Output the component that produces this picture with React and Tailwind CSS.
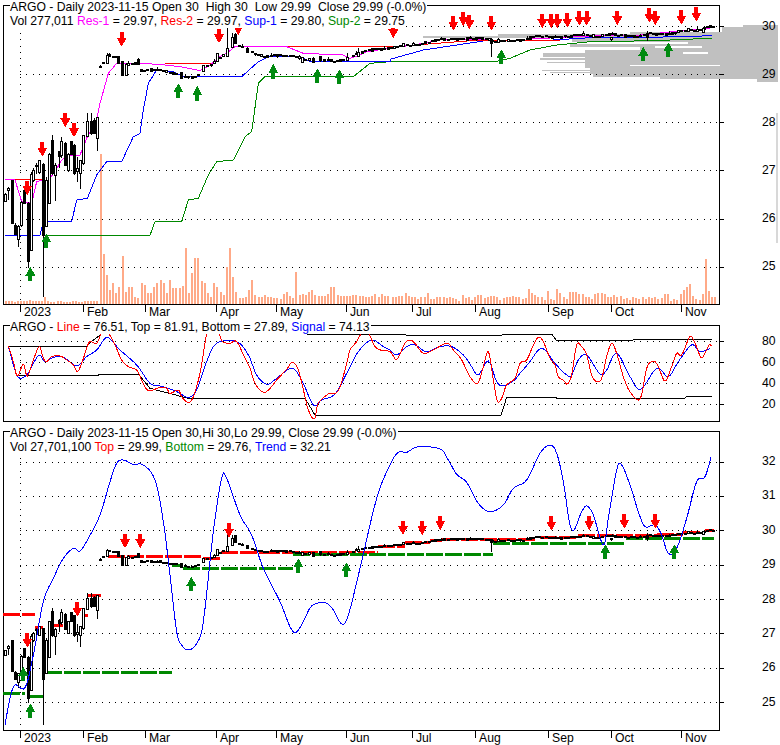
const FONT = "font-['Liberation_Sans',Arial,sans-serif]";
const R = 1170; // x offset of the right half of each traced panel (coords are traced at 3x)

const pts = (left, right, oy) =>
  [...left, ...right.map(([x, y]) => [x + R, y])].map(([x, y]) => `${x / 3},${oy + y / 3}`).join(" ");

// denser points through a traced curve, so it reads as a curve and not as a polygon
const curve = (left, right, oy) => {
  const p = [...left, ...right.map(([x, y]) => [x + R, y])];
  const out = [];
  for (let i = 0; i < p.length - 1; i++) {
    const a = p[Math.max(i - 1, 0)];
    const b = p[i];
    const c = p[i + 1];
    const d = p[Math.min(i + 2, p.length - 1)];
    for (let s = 0; s < 6; s++) {
      const t = s / 6;
      const f = (k) =>
        0.5 * (2 * b[k] + (c[k] - a[k]) * t + (2 * a[k] - 5 * b[k] + 4 * c[k] - d[k]) * t * t + (3 * b[k] - a[k] - 3 * c[k] + d[k]) * t * t * t);
      out.push(`${f(0) / 3},${oy + f(1) / 3}`);
    }
  }
  return out.join(" ");
};

// ---- price panel traces ----
const res1 = pts(
  [[15,538],[45,540],[65,605],[95,610],[110,545],[130,540],[145,540],[165,515],[185,480],[210,465],[240,465],[262,410],[290,360],[300,310],[325,220],[350,190],[430,190],[495,195],[540,200],[600,212],[630,195],[660,170],[680,160],[705,140],[860,140],[885,150],[910,160],[1030,165],[1050,175],[1080,165],[1100,155],[1170,145]],
  [[100,130],[150,120],[300,117],[420,117],[600,108],[750,105],[880,92],[960,85]], 0);
const sup1 = pts(
  [[15,706],[120,706],[130,665],[215,665],[230,600],[262,595],[290,525],[320,485],[365,485],[400,410],[420,400],[430,330],[445,250],[470,210],[520,215],[550,230],[725,230],[775,185],[805,170],[900,170],[930,185],[1170,185]],
  [[0,178],[100,150],[200,135],[300,120],[460,122],[600,113],[760,112],[880,110],[965,107]], 0);
const sup2 = pts(
  [[130,706],[450,706],[465,665],[545,665],[565,600],[595,595],[625,525],[650,485],[700,480],[735,410],[755,395],[775,250],[795,230],[1060,230],[1110,190],[1170,185]],
  [[0,184],[320,184],[360,175],[420,150],[500,135],[600,125],[800,122],[880,118],[965,115]], 0);
const res2 = [[15,538,130,538],[495,190,640,190],[710,140,1170,140]];

const grey = [
  [25,27,743],[27,32,722],[32,34,630],[34,36,498],[36,38,423],[38,42,572],[42,44,688],[44,47,570],[47,50,640],[50,53,585],
  [53,57,543],[57,58,585],[58,60,540],[60,62,585],[62,63,547],[63,68,585],[68,70,590],[70,71,542],[71,72,590],[72,73,550],[73,74,590],[74,77,593],[77,79,660],[79,82,757],
];
const greyNotch = [[655,46,702,47],[683,52,708,53],[630,65,720,65]];

const candles = [
  [15,578,607,582,605,0],[25,560,600,565,572,0],[35,540,672,540,670,1],[45,670,705,675,703,1],[53,675,740,680,718,0],
  [62,603,680,606,675,0],[72,570,612,572,610,1],[83,605,803,610,785,1],[92,515,752,522,750,0],[100,505,545,510,540,0],
  [108,490,522,495,500,1],[118,480,522,482,518,0],[128,490,892,492,705,1],[138,530,680,540,680,0],[148,460,612,462,610,0],
  [157,405,525,420,520,1],[166,490,603,495,525,0],[176,452,505,455,470,1],[184,410,475,425,465,0],[196,425,498,430,495,1],
  [205,460,515,462,510,0],[214,422,465,425,462,1],[223,432,525,435,520,1],[232,470,545,505,515,0],[241,480,568,482,520,0],
  [250,405,495,405,490,0],[260,340,412,365,410,0],[272,340,405,365,400,1],[282,355,402,360,400,1],[290,350,452,352,415,0],
  [320,158,192,165,190,0],[328,160,172,162,170,1],[355,168,192,170,190,1],[365,185,227,185,225,1],[377,190,227,192,225,0],
  [413,175,195,178,193,1],[542,215,238,218,236,1],[610,195,215,197,213,0],[650,158,185,160,183,0],[680,85,172,145,170,0],
  [695,100,145,112,143,0],[705,100,132,103,130,1],[740,142,158,144,156,1],[905,170,188,172,186,0],[938,172,190,174,188,1],
  [960,168,186,170,182,1],[1042,160,182,172,180,0],[1075,145,170,158,168,0],
];
const path = [[305,195],[320,175],[345,168],[387,195],[413,186],[422,210],[480,210],[510,218],[540,225],[560,232],[590,230],[610,205],[640,190],[665,170],[715,135],[740,150],[760,160],[790,170],[830,165],[880,168],[905,178],[940,180],[980,180],[1010,185],[1040,175],[1075,160],[1110,150],[1170,145],[1210,135],[1255,135],[1290,125],[1320,118],[1420,115],[1450,115],[1480,125],[1515,122],[1570,120],[1610,107],[1670,113],[1720,107],[1760,103],[1790,113],[1820,102],[1870,107],[1920,110],[1945,100],[1980,103],[2020,100],[2060,90],[2100,92],[2108,85],[2130,79]];
const yAt = (x) => {
  for (let i = 1; i < path.length; i++) {
    if (x <= path[i][0]) {
      const [x0, y0] = path[i - 1];
      const [x1, y1] = path[i];
      return y0 + ((y1 - y0) * (x - x0)) / (x1 - x0);
    }
  }
  return 79;
};
const heights = [2, 4, 3, 6, 2, 3, 8, 3, 2, 5];
for (let x = 300, i = 0; x < 2140; x += 9.48, i++) {
  if (candles.some((c) => Math.abs(c[0] - x) < 7)) continue;
  const h = heights[i % 10];
  const y = yAt(x) + (i % 3) - 1;
  candles.push([x, y - h / 2 - (i % 9 === 0 ? 6 : 0), y + h / 2 + (i % 7 === 0 ? 3 : 0), y - h / 2, y + h / 2, i % 3 === 0 ? 0 : 1]);
}
candles.push([1474, 115, 172, 118, 130, 1], [1832, 110, 122, 112, 118, 0], [1942, 92, 122, 100, 112, 1], [2110, 85, 100, 85, 98, 0]);

const volLeft = [150,50,29,14,21,11,17,48,12,17,17,7,6,21,19,11,11,17,21,24,21,11,24,16,16,16,18,56,11,31,46,46,23,21,11,7,21,17,12,9,37,56,27,12,6,6,7,14,24,9,7,7,9,7,7,6,6,5,10,12,8,6,32,9,10,9,12,14,9,8,8,8,10,17,17,9,8,8,8,8,9,9,8,8,7,7,8,10,7,10,8,8];
const volRight = [7,7,8,8,11,8,7,7,5,7,7,11,5,5,7,7,7,6,7,6,5,3,9,6,7,4,7,9,9,6,7,8,8,7,4,6,7,7,8,7,7,5,6,15,11,9,7,7,4,13,5,4,15,11,7,5,12,12,12,10,10,7,7,5,10,11,11,10,7,7,9,7,8,5,6,4,7,6,5,7,5,7,6,7,5,6,10,10,3,5,4,10,14,17,20,8,5,4,10,45,13,7,7];
const volFirst = [3,3,3,2,3,3,3,3,4,3,3,3,3,7,3,2,2,3,3,2,2,2,3,3,2,2,3,3,3,3,3];

const downsTop = [[82,585],[127,470],[196,382],[222,412],[365,140],[657,130],[715,105],[1180,115],[1360,92],[1390,78],[1408,88],[1474,92],[1627,85],[1654,85],[1672,85],[1702,83],[1738,77],[1760,77],[1852,76],[1948,68],[1966,76],[2044,74],[2089,65]];
const upsTop = [[91,800],[139,700],[535,250],[592,258],[820,192],[952,205],[1018,208],[1504,148],[1930,140],[2005,127]];

// ---- oscillator traces ----
const oscLine = curve(
  [[25,138],[40,185],[52,228],[70,193],[82,228],[100,180],[118,140],[130,175],[140,185],[155,170],[180,168],[200,180],[220,195],[232,215],[245,190],[260,145],[270,125],[290,130],[305,100],[325,100],[345,135],[365,180],[385,200],[410,210],[425,240],[445,272],[480,262],[500,265],[510,280],[535,270],[545,290],[565,308],[580,290],[600,220],[615,130],[625,90],[655,100],[668,125],[690,130],[710,125],[735,175],[750,205],[765,250],[790,277],[810,265],[830,240],[860,208],[877,187],[895,210],[915,290],[925,330],[943,357],[955,310],[985,282],[1015,272],[1040,190],[1050,150],[1070,125],[1085,100],[1105,100],[1130,145],[1170,155]],
  [[20,178],[45,130],[60,120],[75,130],[100,160],[130,150],[170,130],[190,150],[215,180],[240,230],[263,250],[280,200],[295,155],[310,240],[322,303],[335,295],[350,255],[375,235],[390,190],[410,180],[430,135],[445,112],[460,125],[480,175],[495,195],[505,230],[520,240],[532,252],[545,225],[560,135],[575,140],[590,165],[605,225],[620,245],[635,235],[650,170],[665,130],[680,160],[700,230],[720,275],[750,297],[770,205],[790,183],[805,200],[825,243],[845,200],[860,160],[875,165],[900,110],[915,130],[933,172],[945,160],[958,133],[965,140]], 300);
const oscSignal = curve(
  [[25,138],[52,228],[80,225],[100,190],[118,165],[135,185],[160,172],[190,172],[230,197],[260,170],[290,150],[315,115],[330,117],[360,150],[410,195],[450,250],[480,258],[520,270],[540,280],[565,292],[590,270],[620,185],[650,130],[710,125],[745,165],[770,225],[800,253],[830,235],[875,205],[905,240],[940,315],[965,300],[1005,282],[1040,220],[1075,155],[1115,120],[1150,140],[1170,150]],
  [[20,165],[50,140],[75,135],[110,155],[150,140],[185,140],[220,165],[245,200],[265,225],[295,183],[320,245],[340,257],[370,243],[390,220],[420,185],[445,150],[465,150],[495,190],[530,225],[545,225],[565,180],[590,165],[630,222],[650,210],[680,160],[720,230],[752,268],[800,205],[835,230],[865,185],[905,135],[930,155],[965,143]], 300);
const oscTop = [
  pts([[25,138],[262,138],[270,128],[300,105]], [], 300),
  pts([[920,103],[1170,103]], [[45,103],[50,106],[335,106],[340,102],[485,102],[500,122],[965,118]], 300),
];
const oscBottom = pts(
  [[52,226],[295,226],[295,222],[415,222],[450,265],[565,295],[915,295],[945,345],[1170,345]],
  [[333,346],[350,292],[497,292],[500,295],[885,295],[890,288],[965,288]], 300);

// ---- trend panel traces ----
const trend = curve(
  [[15,900],[30,820],[45,780],[75,788],[100,690],[130,530],[160,460],[190,400],[220,370],[240,378],[265,340],[300,270],[330,170],[350,115],[370,105],[400,118],[430,120],[465,165],[490,290],[510,450],[530,620],[545,660],[565,675],[590,655],[610,590],[640,320],[665,160],[680,160],[720,270],[755,330],[790,430],[840,530],[870,605],[888,622],[910,590],[935,543],[975,533],[1000,555],[1025,597],[1045,570],[1080,430],[1130,220],[1170,120]],
  [[25,82],[50,82],[85,65],[150,72],[175,105],[200,148],[230,172],[265,235],[300,260],[340,240],[370,190],[410,165],[450,85],[480,60],[500,85],[520,170],[545,315],[575,260],[590,243],[610,270],[640,360],[655,280],[680,135],[695,120],[720,180],[745,260],[765,305],[795,300],[815,330],[835,385],[860,370],[890,280],[920,170],[945,155],[965,90]], 425);
const topSegs = [[10,105,568],[105,130,607],[160,190,600],[245,265,570],[265,302,510],[325,610,393],[610,662,400],[662,790,382],[790,1135,381],[1135,1215,363],[1215,1290,352],[1290,1325,346],[1325,1610,343],[1620,1735,337],[1735,1970,331],[1970,2050,328],[2050,2110,322],[2115,2142,316]];
const botSegs = [[10,75,805],[85,130,813],[135,515,742],[515,550,420],[550,880,430],[880,1478,388],[1480,1878,354],[1878,2142,340]];
const downsBot = [[82,668],[232,575],[375,370],[421,370],[687,338],[1209,330],[1267,330],[1321,315],[1654,317],[1768,315],[1873,311],[1966,311]];
const upsBot = [[70,725],[91,835],[574,455],[895,400],[1039,412],[1816,358],[2023,358]];

const months = [["2023","w-[63px]"],["Feb","w-[62px]"],["Mar","w-[71px]"],["Apr","w-[60px]"],["May","w-[70px]"],["Jun","w-[66px]"],["Jul","w-[63px]"],["Aug","w-[73px]"],["Sep","w-[63px]"],["Oct","w-[70px]"],["Nov","w-[38px]"]];

const Dots = ({ ys, y1, y2 }) => (
  <g stroke="#000" strokeDasharray="1 5.33" shapeRendering="crispEdges">
    {ys.map((y) => (
      <line key={y} x1="20" x2="719" y1={y} y2={y} />
    ))}
    <line x1="20.5" x2="20.5" y1={y1} y2={y2} />
  </g>
);

const Ticks = ({ ys }) => (
  <g stroke="#000" shapeRendering="crispEdges">
    {ys.map((y) => (
      <line key={y} x1="719" x2="724" y1={y} y2={y} />
    ))}
  </g>
);

const Line = ({ points, color, width = 1 }) => (
  <polyline points={points} fill="none" stroke={color} strokeWidth={width} shapeRendering="crispEdges" />
);

const Arrow = ({ x, y, up }) => {
  const s = up ? -1 : 1;
  const shape = [[-2,-14.5],[2,-14.5],[2,-9],[5,-9],[0,0],[-5,-9],[-2,-9]];
  return (
    <polygon
      points={shape.map(([dx, dy]) => `${x + dx},${y + s * dy}`).join(" ")}
      fill={up ? "#008a10" : "#ff0000"}
      shapeRendering="crispEdges"
    />
  );
};

const Candles = ({ map }) => (
  <g shapeRendering="crispEdges">
    {candles.map(([x, hi, lo, top, bot, filled], i) => {
      const cx = Math.round(x / 3) + 0.5;
      return (
        <g key={i}>
          <line x1={cx} x2={cx} y1={map(hi / 3)} y2={map(lo / 3)} stroke="#000" />
          <rect
            x={cx - 1}
            y={map(top / 3)}
            width="2"
            height={Math.max(1, map(bot / 3) - map(top / 3))}
            fill={filled ? "#000" : "#fff"}
            stroke="#000"
          />
        </g>
      );
    })}
  </g>
);

const Legend = ({ lines }) => (
  <div className="absolute left-[6px] top-[-6px] flex flex-col items-start text-[12.2px] leading-[14px] text-black whitespace-pre">
    {lines.map((l, i) => (
      <div key={i} className="bg-white pr-[1px]">{l}</div>
    ))}
  </div>
);

const MonthAxis = () => (
  <div className="flex h-[20px] pl-[20px] text-[12.2px] leading-[14px] text-black">
    {months.map(([m, w]) => (
      <div key={m} className={`flex items-start ${w}`}>
        <span className="w-px h-[7px] bg-black" />
        <span className="pl-[3px]">{m}</span>
      </div>
    ))}
  </div>
);

const PricePanel = () => (
  <div className="relative w-[717px] h-[300px] ml-[3px] border border-black">
    <svg viewBox="4 6 715 298" width="715" height="298" className="block overflow-visible">
      <g fill="#c0c0c0" shapeRendering="crispEdges">
        {grey.map(([y0, y1, x]) => (
          <rect key={y0} x={x} y={y0} width={778 - x} height={y1 - y0} />
        ))}
        <rect x="776" y="113" width="2" height="130" fill="#d8d8d8" />
      </g>
      <g fill="#fff" shapeRendering="crispEdges">
        {greyNotch.map(([x0, y0, x1, y1]) => (
          <rect key={x0} x={x0} y={y0} width={x1 - x0} height={y1 - y0 + 1} />
        ))}
      </g>
      <Dots ys={[26, 74, 122, 170, 219, 267]} y1={33} y2={304} />
      <Ticks ys={[26, 74, 122, 170, 219, 267]} />
      <g fill="#ffaa88" shapeRendering="crispEdges">
        {volFirst.map((h, i) => (
          <rect key={i} x={5 + i * 3.03} y={304 - h} width="2" height={h} />
        ))}
        {volLeft.map((h, i) => (
          <rect key={i} x={Math.round(99.5 + i * 3.16)} y={304 - h} width="2" height={h} />
        ))}
        {volRight.map((h, i) => (
          <rect key={i} x={Math.round(392 + i * 3.16)} y={304 - h} width="2" height={h} />
        ))}
      </g>
      <Line points={sup2} color="#008800" />
      <Line points={sup1} color="#0000ff" />
      {res2.map(([x1, y1, x2, y2]) => (
        <line key={x1} x1={x1 / 3} x2={x2 / 3} y1={y1 / 3} y2={y2 / 3} stroke="#ff0000" shapeRendering="crispEdges" />
      ))}
      <Line points="390,47 480,40 560,40" color="#ff0000" />
      <Line points={res1} color="#ff00ff" />
      <Candles map={(y) => y} />
      {downsTop.map(([x, y]) => <Arrow key={x} x={x / 3} y={y / 3} />)}
      {upsTop.map(([x, y]) => <Arrow key={x} x={x / 3} y={y / 3} up />)}
    </svg>
    <Legend
      lines={[
        <>
          ARGO - Daily 2023-11-15 Open 30<span className="ml-[7px]">High 30</span><span className="ml-[7px]">Low 29.99</span><span className="ml-[7px]">Close 29.99 (-0.0%)</span>
        </>,
        <>
          Vol 277,011 <span className="text-[#ff00ff]">Res-1</span> = 29.97, <span className="text-[#ff0000]">Res-2</span> = 29.97, <span className="text-[#0000ff]">Sup-1</span> = 29.80, <span className="text-[#008800]">Sup-2</span> = 29.75
        </>,
      ]}
    />
  </div>
);

const OscPanel = () => (
  <div className="relative w-[717px] h-[97px] ml-[3px] border border-black">
    <svg viewBox="4 326 715 95" width="715" height="95" className="block overflow-visible">
      <Dots ys={[341, 362, 383, 404]} y1={335} y2={420} />
      <Ticks ys={[341, 362, 383, 404]} />
      {oscTop.map((p, i) => <Line key={i} points={p} color="#000" />)}
      <Line points={oscBottom} color="#000" />
      <Line points={oscSignal} color="#0000ff" />
      <Line points={oscLine} color="#ff0000" />
    </svg>
    <Legend
      lines={[
        <>
          ARGO - <span className="text-[#ff0000]">Line</span> = 76.51, Top = 81.91, Bottom = 27.89, <span className="text-[#0000ff]">Signal</span> = 74.13
        </>,
      ]}
    />
  </div>
);

const TrendPanel = () => (
  <div className="relative w-[717px] h-[300px] ml-[3px] border border-black">
    <svg viewBox="4 432 715 298" width="715" height="298" className="block overflow-visible">
      <Dots ys={[462, 496, 530, 565, 599, 633, 668, 702]} y1={458} y2={730} />
      <Ticks ys={[462, 496, 530, 565, 599, 633, 668, 702]} />
      <g strokeWidth="3" strokeDasharray="17 2" shapeRendering="crispEdges">
        {topSegs.map(([x1, x2, y]) => (
          <line key={x1} x1={x1 / 3} x2={x2 / 3} y1={425 + y / 3} y2={425 + y / 3} stroke="#ff0000" />
        ))}
        {botSegs.map(([x1, x2, y]) => (
          <line key={x1} x1={x1 / 3} x2={x2 / 3} y1={425 + y / 3} y2={425 + y / 3} stroke="#008800" />
        ))}
      </g>
      <Candles map={(y) => 530 + (y - 26) * 0.717} />
      <Line points={trend} color="#0000ff" />
      {downsBot.map(([x, y]) => <Arrow key={x} x={x / 3} y={425 + y / 3} />)}
      {upsBot.map(([x, y]) => <Arrow key={x} x={x / 3} y={425 + y / 3} up />)}
    </svg>
    <Legend
      lines={[
        "ARGO - Daily 2023-11-15 Open 30,Hi 30,Lo 29.99, Close 29.99 (-0.0%)",
        <>
          Vol 27,701,100 <span className="text-[#ff0000]">Top</span> = 29.99, <span className="text-[#008800]">Bottom</span> = 29.76, <span className="text-[#0000ff]">Trend</span> = 32.21
        </>,
      ]}
    />
  </div>
);

const Scale = ({ labels, className, itemClass }) => (
  <div className={`relative z-10 flex flex-col w-[60px] pl-[42px] text-[12.2px] text-black ${className}`}>
    {labels.map((l) => (
      <div key={l} className={`flex items-center ${itemClass}`}>{l}</div>
    ))}
  </div>
);

export default function App() {
  return (
    <div className={`w-[780px] h-[745px] bg-white overflow-hidden pt-[5px] ${FONT}`}>
      <div className="flex">
        <PricePanel />
        <Scale labels={[30, 29, 28, 27, 26, 25]} className="-mt-[3px]" itemClass="h-[48px]" />
      </div>
      <MonthAxis />
      <div className="flex">
        <OscPanel />
        <Scale labels={[80, 60, 40, 20]} className="pt-[6px]" itemClass="h-[21px]" />
      </div>
      <div className="flex mt-[9px]">
        <TrendPanel />
        <Scale labels={[32, 31, 30, 29, 28, 27, 26, 25]} className="pt-[13px]" itemClass="h-[34.4px]" />
      </div>
      <MonthAxis />
    </div>
  );
}
